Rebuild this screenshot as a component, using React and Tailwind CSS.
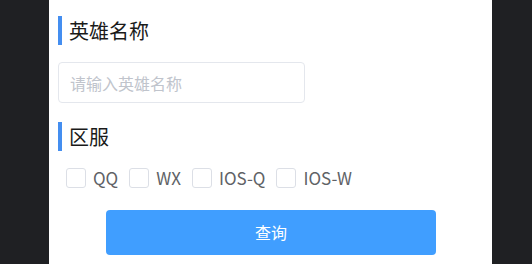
import React from "react";

function Heading({ children }) {
  return (
    <div className="flex items-center h-[29px]">
      <div className="w-[4px] h-[29px] bg-[#448ef0]" />
      <span className="ml-[7px] text-[20px] leading-[29px] text-[#1a1a1a]">{children}</span>
    </div>
  );
}

function Check({ label }) {
  return (
    <label className="flex items-center mr-[11px]">
      <span className="w-[20px] h-[20px] rounded-[3px] border border-[#dcdfe6] bg-white" />
      <span className="ml-[7px] text-[17px] leading-[20px] text-[#606266]">{label}</span>
    </label>
  );
}

export default function App() {
  return (
    <div
      className="w-[532px] h-[264px] bg-[#1f2023] flex overflow-hidden"
      style={{ fontFamily: '"Noto Sans CJK SC", "Noto Sans", sans-serif' }}
    >
      <div className="ml-[49px] w-[443px] h-full bg-white pl-[9px] pt-[16px]">
        <Heading>英雄名称</Heading>
        <div className="mt-[17px] w-[247px] h-[41px] border border-[#e4e7ed] rounded-[4px] flex items-center pl-[11px] text-[16px] text-[#c0c4cc]">
          请输入英雄名称
        </div>
        <div className="mt-[19px]">
          <Heading>区服</Heading>
        </div>
        <div className="mt-[16px] ml-[8px] flex items-center h-[22px]">
          <Check label="QQ" />
          <Check label="WX" />
          <Check label="IOS-Q" />
          <Check label="IOS-W" />
        </div>
        <div className="mt-[21px] ml-[48px] w-[330px] h-[45px] rounded-[4px] bg-[#409eff] flex items-center justify-center text-white text-[16px] pb-[2px]">
          查询
        </div>
      </div>
    </div>
  );
}
